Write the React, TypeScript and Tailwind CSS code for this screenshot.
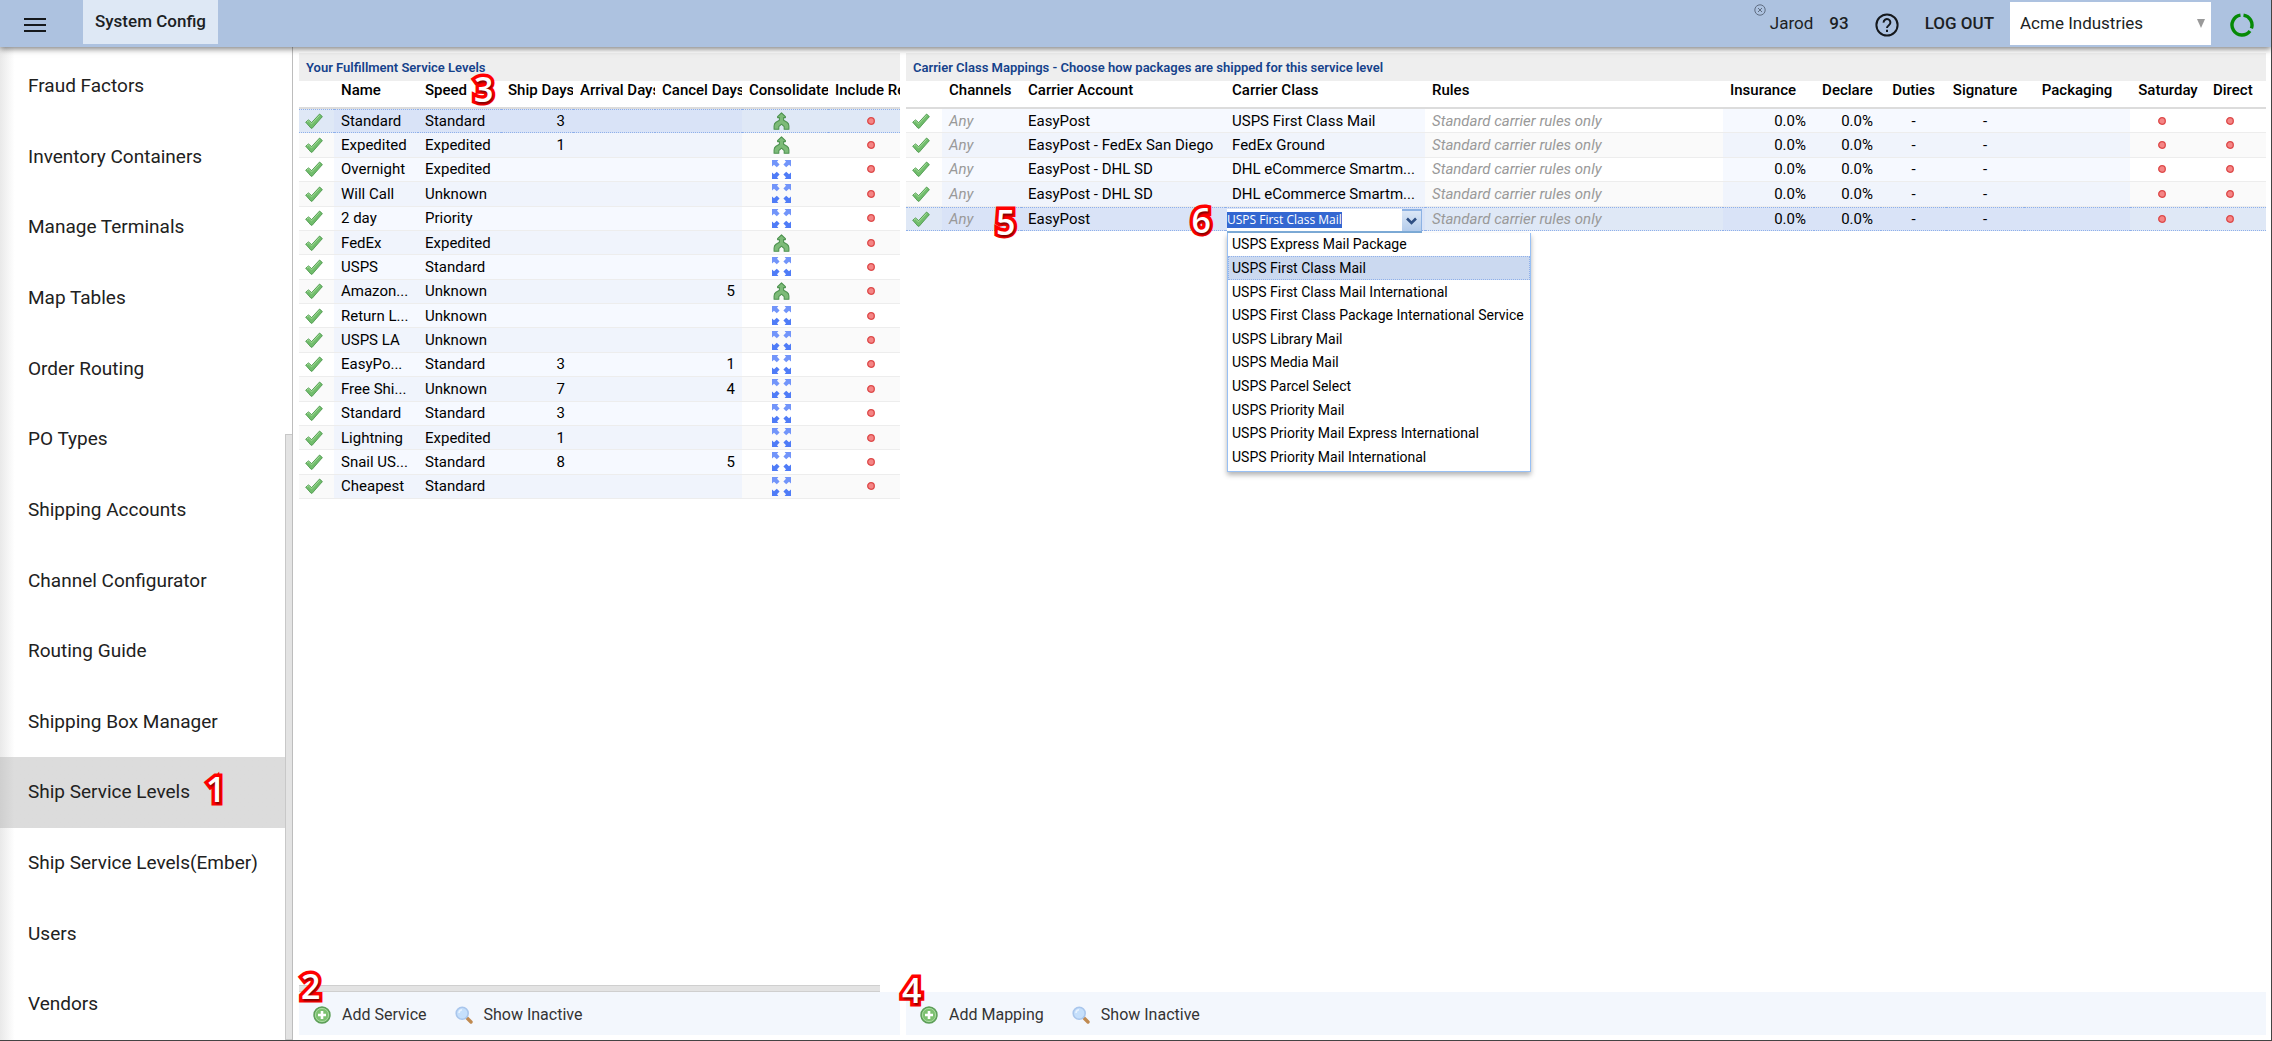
import { useEffect, useRef } from 'react'
import type { ReactNode } from 'react'

const NAV_ITEMS = [
  'Fraud Factors',
  'Inventory Containers',
  'Manage Terminals',
  'Map Tables',
  'Order Routing',
  'PO Types',
  'Shipping Accounts',
  'Channel Configurator',
  'Routing Guide',
  'Shipping Box Manager',
  'Ship Service Levels',
  'Ship Service Levels(Ember)',
  'Users',
  'Vendors',
]

interface ServiceLevel {
  name: string
  speed: string
  ship?: number
  cancel?: number
  merge?: boolean
}

const SERVICE_LEVELS: ServiceLevel[] = [
  { name: 'Standard', speed: 'Standard', ship: 3, merge: true },
  { name: 'Expedited', speed: 'Expedited', ship: 1, merge: true },
  { name: 'Overnight', speed: 'Expedited' },
  { name: 'Will Call', speed: 'Unknown' },
  { name: '2 day', speed: 'Priority' },
  { name: 'FedEx', speed: 'Expedited', merge: true },
  { name: 'USPS', speed: 'Standard' },
  { name: 'Amazon...', speed: 'Unknown', cancel: 5, merge: true },
  { name: 'Return L...', speed: 'Unknown' },
  { name: 'USPS LA', speed: 'Unknown' },
  { name: 'EasyPo...', speed: 'Standard', ship: 3, cancel: 1 },
  { name: 'Free Shi...', speed: 'Unknown', ship: 7, cancel: 4 },
  { name: 'Standard', speed: 'Standard', ship: 3 },
  { name: 'Lightning', speed: 'Expedited', ship: 1 },
  { name: 'Snail US...', speed: 'Standard', ship: 8, cancel: 5 },
  { name: 'Cheapest', speed: 'Standard' },
]

const MAPPINGS = [
  { account: 'EasyPost', carrierClass: 'USPS First Class Mail' },
  { account: 'EasyPost - FedEx San Diego', carrierClass: 'FedEx Ground' },
  { account: 'EasyPost - DHL SD', carrierClass: 'DHL eCommerce Smartm...' },
  { account: 'EasyPost - DHL SD', carrierClass: 'DHL eCommerce Smartm...' },
  { account: 'EasyPost', carrierClass: 'USPS First Class Mail', editing: true },
]

const CARRIER_CLASSES = [
  'USPS Express Mail Package',
  'USPS First Class Mail',
  'USPS First Class Mail International',
  'USPS First Class Package International Service',
  'USPS Library Mail',
  'USPS Media Mail',
  'USPS Parcel Select',
  'USPS Priority Mail',
  'USPS Priority Mail Express International',
  'USPS Priority Mail International',
]

function CheckIcon() {
  return (
    <svg width="18" height="16" viewBox="0 0 18 16" className="block">
      <path d="M0.7 9.2 3.5 6.9 6.6 9.6 14.6 1 17.4 3.6 7.2 15.2 6 15.2Z" fill="#71bd6c" stroke="#4f9a4f" strokeWidth="0.9" strokeLinejoin="round" />
      <path d="M2 9 3.5 7.9 6.6 10.8 14.6 2.3" fill="none" stroke="#a3dc98" strokeWidth="1" />
    </svg>
  )
}

function MergeIcon() {
  return (
    <svg width="17" height="18" viewBox="0 0 17 18" className="block">
      <path
        d="M8.5 0.8 12.4 4.6V5.6H10.6V8.2L14 10.2Q15.9 11.6 15.9 14V17.2H11.2V14.6L8.5 12.2 5.8 14.6V17.2H1.1V14Q1.1 11.6 3 10.2L6.4 8.2V5.6H4.6V4.6Z"
        fill="#7dbb78"
        stroke="#4e9350"
        strokeWidth="1.1"
        strokeLinejoin="round"
      />
    </svg>
  )
}

function SpreadIcon() {
  return (
    <svg width="19" height="19" viewBox="0 0 19 19" className="block">
      <g fill="#7295fa">
        <path d="M0 0H6.4L5 1.8 7.6 4.4 4.8 7.2 2 4.8 0 6.4Z" />
        <path d="M19 0H12.6L14 1.8 11.4 4.4 14.2 7.2 17 4.8 19 6.4Z" />
      </g>
      <g fill="#4f7cf7">
        <path d="M0 19H6.4L5 17.2 7.6 14.6 4.8 11.8 2 14.2 0 12.6Z" />
        <path d="M19 19H12.6L14 17.2 11.4 14.6 14.2 11.8 17 14.2 19 12.6Z" />
      </g>
    </svg>
  )
}

function DotIcon() {
  return (
    <svg width="8" height="8" viewBox="0 0 8 8" className="block">
      <circle cx="4" cy="4" r="3.3" fill="#f58585" stroke="#dd4848" strokeWidth="1.3" />
    </svg>
  )
}

function AddIcon() {
  return (
    <svg width="18" height="18" viewBox="0 0 18 18">
      <circle cx="9" cy="9" r="8" fill="#7cc070" stroke="#5c9e58" strokeWidth="1.4" />
      <circle cx="9" cy="9" r="6.6" fill="none" stroke="#a9d9a0" strokeWidth="1" />
      <path d="M9 5V13M5 9H13" stroke="#fff" strokeWidth="2.6" />
    </svg>
  )
}

function SearchIcon() {
  return (
    <svg width="18" height="18" viewBox="0 0 18 18">
      <path d="M11.5 11.5 16 16" stroke="#c08a50" strokeWidth="3.4" strokeLinecap="round" />
      <circle cx="7.2" cy="7.2" r="6" fill="#c5dffb" stroke="#a9c6ec" strokeWidth="1.6" />
      <path d="M4 7A3.4 3.4 0 0 1 7 3.8" fill="none" stroke="#e8f3ff" strokeWidth="1.6" />
    </svg>
  )
}

// Numbered step marker laid over the screen
function Step({ n, className }: { n: number; className: string }) {
  return (
    <span
      className={`pointer-events-none z-20 font-['Open_Sans',sans-serif] text-[34px] leading-8 font-semibold text-white not-italic [-webkit-text-stroke:7px_#f00] [paint-order:stroke_fill] [text-shadow:1px_2px_2px_rgba(0,0,0,0.5)] ${className}`}
    >
      {n}
    </span>
  )
}

function TopBar() {
  return (
    <header className="relative z-30 flex h-[47px] shrink-0 items-center bg-[#adc2e0] text-[17px] text-[#1c1f24] shadow-[0_2px_6px_rgba(0,0,0,0.5)]">
      <button type="button" aria-label="Menu" className="ml-6 flex h-full w-[59px] items-center pt-0.5">
        <svg width="22" height="16" viewBox="0 0 22 16">
          <path d="M0 2H22M0 8H22M0 14H22" stroke="#15181c" strokeWidth="2" />
        </svg>
      </button>
      <a href="#system" className="flex h-11 items-center self-start bg-[#dee8f5] px-3 font-medium">
        System Config
      </a>
      <div className="ml-auto flex h-full items-center">
        <svg width="12" height="12" viewBox="0 0 12 12" className="mt-1 self-start">
          <circle cx="6" cy="6" r="5.2" fill="none" stroke="#5f6c80" strokeWidth="1" />
          <path d="M4 4 8 8M8 4 4 8" stroke="#5f6c80" strokeWidth="1" />
        </svg>
        <span className="ml-1">Jarod</span>
        <span className="ml-4 font-medium">93</span>
        <button type="button" aria-label="Help" className="ml-[26px] pt-0.5">
          <svg width="24" height="24" viewBox="0 0 24 24" fill="none" stroke="#15181c" strokeWidth="2">
            <circle cx="12" cy="12" r="10.6" />
            <path d="M8.6 9.6A3.4 3.4 0 1 1 13.9 12.2C12.5 13.2 12 13.6 12 15" />
            <path d="M12 16.8V19" />
          </svg>
        </button>
        <button type="button" className="ml-[26px] font-medium">
          LOG OUT
        </button>
        <div className="relative ml-4 h-[43px] w-[201px]">
          <select aria-label="Company" className="h-full w-full appearance-none bg-white px-[10px] text-[17px]">
            <option>Acme Industries</option>
          </select>
          <svg width="8" height="9" viewBox="0 0 8 9" className="pointer-events-none absolute top-[17px] right-[6px]">
            <path d="M0 0H8L4 9Z" fill="#999" />
          </svg>
        </div>
        <svg width="24" height="24" viewBox="0 0 24 24" className="mt-0.5 mr-[17px] ml-[19px]" fill="none" stroke="#068a06" strokeWidth="3.4">
          <path d="M13.5 2.1A10 10 0 0 1 21.4 15.4M20 18A10 10 0 1 1 10.5 2.1" />
        </svg>
      </div>
    </header>
  )
}

function Sidebar() {
  return (
    <div className="flex w-[293px] shrink-0 border-r border-[#bdbdbd] bg-gradient-to-r from-[#e9e9e9] to-white to-5%">
      <nav className="flex flex-1 flex-col pt-1">
        {NAV_ITEMS.map((item) => {
          const active = item === 'Ship Service Levels'
          return (
            <a
              key={item}
              href="#nav"
              className={`flex flex-1 items-center pl-7 text-[19px] text-[#212121] ${
                active ? 'bg-gradient-to-r from-[#cfcfcf] to-[#dcdcdc] to-5%' : ''
              }`}
            >
              {item}
              {active && <Step n={1} className="mb-2 ml-4" />}
            </a>
          )
        })}
      </nav>
      <div className="flex w-[7px] flex-col justify-end">
        <div className="h-[61%] border border-r-0 border-[#c8c8c8] bg-[#e3e3e3]" />
      </div>
    </div>
  )
}

function HeadCell({ children, className = 'pl-[7px] text-left' }: { children?: ReactNode; className?: string }) {
  return (
    <th scope="col" className={`relative h-7 border-b-2 border-[#dcdcdc] pb-2 leading-[18px] font-medium ${className}`}>
      {children}
    </th>
  )
}

function PanelTitle({ children }: { children: ReactNode }) {
  return <h2 className="h-7 shrink-0 bg-[#eee] px-[7px] pt-px text-[13px] leading-7 font-semibold text-[#15428b]">{children}</h2>
}

function Toolbar({ add, children }: { add: string; children: ReactNode }) {
  return (
    <div className="relative flex h-[43px] shrink-0 items-center bg-[#f3f7fd] pt-0.5 pl-[14px] text-base text-[#333]">
      <button type="button" className="flex items-center gap-[11px]">
        <AddIcon />
        {add}
      </button>
      <button type="button" className="ml-7 flex items-center gap-[11px]">
        <SearchIcon />
        Show Inactive
      </button>
      {children}
    </div>
  )
}

// Editable columns are tinted, icon columns are plain, both darker on even rows
function cellColors(index: number, selected: boolean) {
  if (selected) {
    return {
      plain: 'border-y border-dotted border-[#8fb0ea] bg-[#dfe8f6]',
      tint: 'border-y border-dotted border-[#8fb0ea] bg-[#d9e3f7]',
    }
  }
  return index % 2 === 0
    ? { plain: 'border-b border-[#ededed] bg-white', tint: 'border-b border-[#ededed] bg-[#f6f9ff]' }
    : { plain: 'border-b border-[#ededed] bg-[#fafafa]', tint: 'border-b border-[#ededed] bg-[#f0f4fc]' }
}

function ServicePanel() {
  return (
    <section className="flex w-[601px] shrink-0 flex-col">
      <PanelTitle>Your Fulfillment Service Levels</PanelTitle>
      <div className="flex-1 overflow-x-clip">
        <table className="h-[418px] w-[615px] table-fixed border-separate border-spacing-0 text-[15px] leading-5">
          <colgroup>
            <col className="w-[35px]" />
            <col className="w-[84px]" />
            <col className="w-[83px]" />
            <col className="w-[72px]" />
            <col className="w-[82px]" />
            <col className="w-[87px]" />
            <col className="w-[86px]" />
            <col className="w-[86px]" />
          </colgroup>
          <thead>
            <tr>
              <HeadCell />
              <HeadCell>Name</HeadCell>
              <HeadCell>
                Speed
                <Step n={3} className="absolute -top-2 left-14" />
              </HeadCell>
              {['Ship Days', 'Arrival Days', 'Cancel Days', 'Consolidate', 'Include Returns'].map((label) => (
                <HeadCell key={label}>
                  <span className="block overflow-hidden whitespace-nowrap">{label}</span>
                </HeadCell>
              ))}
            </tr>
          </thead>
          <tbody>
            {SERVICE_LEVELS.map((level, i) => {
              const { plain, tint } = cellColors(i, i === 0)
              return (
                <tr key={i} className="h-6">
                  <td className={`pl-[6px] ${plain}`}>
                    <CheckIcon />
                  </td>
                  <td className={`pl-[7px] whitespace-nowrap ${tint}`}>{level.name}</td>
                  <td className={`pl-[7px] ${tint}`}>{level.speed}</td>
                  <td className={`pr-2 text-right ${tint}`}>{level.ship}</td>
                  <td className={tint} />
                  <td className={`pr-[7px] text-right ${tint}`}>{level.cancel}</td>
                  <td className={`pr-2 ${plain}`}>
                    <div className="flex justify-center">{level.merge ? <MergeIcon /> : <SpreadIcon />}</div>
                  </td>
                  <td className={plain}>
                    <div className="flex justify-center">
                      <DotIcon />
                    </div>
                  </td>
                </tr>
              )
            })}
          </tbody>
        </table>
      </div>
      <div className="mr-5 h-[7px] shrink-0 border-y border-[#cfcfcf] bg-[#e3e3e3]" />
      <Toolbar add="Add Service">
        <Step n={2} className="absolute -top-[22px] left-0.5" />
      </Toolbar>
    </section>
  )
}

function CarrierClassEditor({ value }: { value: string }) {
  const inputRef = useRef<HTMLInputElement>(null)

  useEffect(() => {
    inputRef.current?.focus()
    inputRef.current?.select()
  }, [])

  return (
    <div className="absolute top-px left-0.5 z-10">
      <div className="flex h-6 w-[195px] border-b-2 border-[#7eadd9]">
        <input
          ref={inputRef}
          aria-label="Carrier Class"
          defaultValue={value}
          className="w-[175px] bg-white font-['Open_Sans',sans-serif] text-xs text-black outline-none selection:bg-[#3367d1] selection:text-white"
        />
        <button
          type="button"
          aria-label="Show carrier classes"
          className="flex flex-1 items-center justify-center border-t-2 border-r border-[#8db2e3] bg-gradient-to-b from-[#dbe7f6] to-[#b3cbeb]"
        >
          <svg width="11" height="8" viewBox="0 0 11 8">
            <path d="M1 1.5 5.5 6 10 1.5" fill="none" stroke="#2f4f83" strokeWidth="2.6" />
          </svg>
        </button>
      </div>
      <ul
        role="listbox"
        className="flex h-[239px] w-[304px] flex-col border border-t-0 border-[#98c0f4] bg-white pb-0.5 text-sm shadow-[0_3px_5px_rgba(0,0,0,0.3)]"
      >
        {CARRIER_CLASSES.map((name) => (
          <li
            key={name}
            role="option"
            aria-selected={name === value}
            className={`flex flex-1 items-center border border-dotted px-[3px] whitespace-nowrap ${
              name === value ? 'border-[#8fb0ea] bg-[#cbd9f0]' : 'border-transparent'
            }`}
          >
            {name}
          </li>
        ))}
      </ul>
    </div>
  )
}

function MappingPanel() {
  return (
    <section className="flex min-w-0 flex-1 flex-col">
      <PanelTitle>Carrier Class Mappings - Choose how packages are shipped for this service level</PanelTitle>
      <div className="flex-1">
        <table className="h-[150px] w-full table-fixed border-separate border-spacing-0 text-[15px] leading-5">
          <colgroup>
            <col className="w-[36px]" />
            <col className="w-[79px]" />
            <col className="w-[204px]" />
            <col className="w-[200px]" />
            <col />
            <col className="w-[91px]" />
            <col className="w-[67px]" />
            <col className="w-[65px]" />
            <col className="w-[78px]" />
            <col className="w-[106px]" />
            <col className="w-[76px]" />
            <col className="w-[60px]" />
          </colgroup>
          <thead>
            <tr>
              <HeadCell />
              <HeadCell>Channels</HeadCell>
              <HeadCell>Carrier Account</HeadCell>
              <HeadCell>Carrier Class</HeadCell>
              <HeadCell>Rules</HeadCell>
              <HeadCell>Insurance</HeadCell>
              {['Declare', 'Duties', 'Signature', 'Packaging', 'Saturday'].map((label) => (
                <HeadCell key={label} className="text-center">
                  {label}
                </HeadCell>
              ))}
              <HeadCell>Direct</HeadCell>
            </tr>
          </thead>
          <tbody>
            {MAPPINGS.map((mapping, i) => {
              const { plain, tint } = cellColors(i, !!mapping.editing)
              return (
                <tr key={i} className="h-6">
                  <td className={`pl-[6px] ${plain}`}>
                    <CheckIcon />
                  </td>
                  <td className={`relative pl-[7px] text-[#999] italic ${tint}`}>
                    Any
                    {mapping.editing && <Step n={5} className="absolute -top-0.5 left-[54px]" />}
                  </td>
                  <td className={`relative pl-[7px] whitespace-nowrap ${tint}`}>
                    {mapping.account}
                    {mapping.editing && <Step n={6} className="absolute -top-1 right-[14px]" />}
                  </td>
                  <td className={`relative pl-[7px] whitespace-nowrap ${tint}`}>
                    {mapping.editing ? <CarrierClassEditor value={mapping.carrierClass} /> : mapping.carrierClass}
                  </td>
                  <td className={`pl-[7px] text-[#999] italic ${plain}`}>Standard carrier rules only</td>
                  <td className={`pr-2 text-right ${tint}`}>0.0%</td>
                  <td className={`pr-2 text-right ${tint}`}>0.0%</td>
                  <td className={`text-center ${tint}`}>-</td>
                  <td className={`text-center ${tint}`}>-</td>
                  <td className={tint} />
                  <td className={`pr-3 ${plain}`}>
                    <div className="flex justify-center">
                      <DotIcon />
                    </div>
                  </td>
                  <td className={`pr-3 ${plain}`}>
                    <div className="flex justify-center">
                      <DotIcon />
                    </div>
                  </td>
                </tr>
              )
            })}
          </tbody>
        </table>
      </div>
      <Toolbar add="Add Mapping">
        <Step n={4} className="absolute -top-[18px] -left-1" />
      </Toolbar>
    </section>
  )
}

export default function App() {
  return (
    <div className="flex h-screen flex-col overflow-hidden border-r border-b border-[#444] bg-white font-[Roboto,sans-serif] text-black">
      <TopBar />
      <div className="flex min-h-0 flex-1">
        <Sidebar />
        <main className="flex min-w-0 flex-1 gap-[6px] px-[6px] pt-[6px] pr-[5px] pb-[5px]">
          <ServicePanel />
          <MappingPanel />
        </main>
      </div>
    </div>
  )
}
